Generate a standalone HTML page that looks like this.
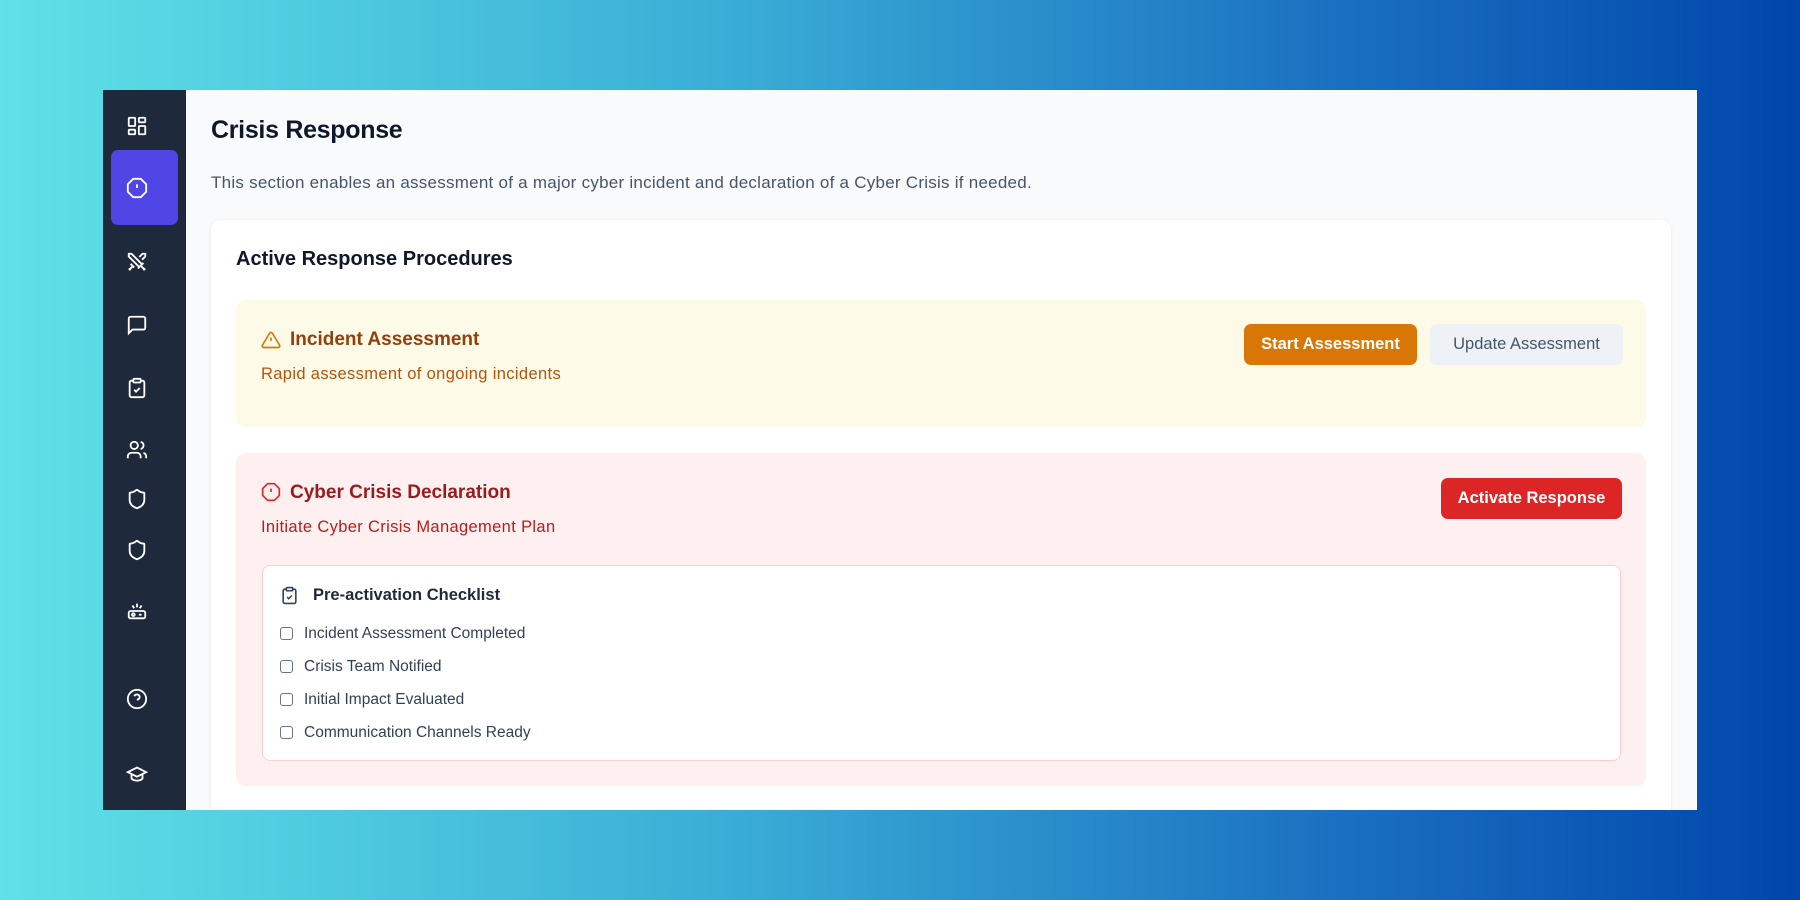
<!DOCTYPE html>
<html><head><style>
*{box-sizing:border-box;margin:0;padding:0}
body{width:1800px;height:900px;overflow:hidden;background:linear-gradient(90deg,#5fe1e6 0%,#3aaed6 40%,#1a6fc0 75%,#0046ab 100%);font-family:"Liberation Sans",sans-serif;position:relative}
.frame{position:absolute;left:103px;top:90px;width:1594px;height:720px;background:#f8fafc;overflow:hidden}
.side{position:absolute;left:0;top:0;width:83px;height:720px;background:#1e293b}
.ic{position:absolute;left:23px;width:22px;height:22px}
.active{position:absolute;left:8px;top:60px;width:67px;height:75px;background:#4f46e5;border-radius:7px}
h1{position:absolute;left:108px;top:26px;font-size:25px;font-weight:700;color:#0f172a;letter-spacing:-0.3px}
.desc{position:absolute;left:108px;top:83px;font-size:17px;letter-spacing:0.25px;color:#475569}
.card{position:absolute;left:108px;top:130px;width:1460px;height:620px;background:#fff;border-radius:10px;box-shadow:0 1px 4px rgba(0,0,0,.08)}
h2{position:absolute;left:25px;top:28px;font-size:20px;font-weight:700;color:#0f172a}
.box{position:absolute;left:25px;width:1410px;border-radius:10px}
.y{top:80px;height:127px;background:#fefae8}
.r{top:233px;height:333px;background:#fef0f0}
.t{position:absolute;left:54px;font-size:19px;font-weight:700}
.s{position:absolute;left:25px;font-size:16.5px;letter-spacing:0.35px}
.btn{position:absolute;height:41px;border-radius:7px;font-size:16.5px;font-weight:700;line-height:41px;text-align:center;color:#fff}
.chk{position:absolute;left:26px;top:112px;width:1359px;height:196px;background:#fff;border:1px solid #fbcfd4;border-radius:8px}
.item{position:absolute;left:41px;font-size:15.5px;color:#334155}
.cb{position:absolute;left:17px;width:13px;height:13px;border:1.5px solid #64748b;border-radius:3px}
</style></head><body>
<div class="frame">
<div class="side">
<svg class="ic" style="top:25px" viewBox="0 0 24 24" fill="none" stroke="#fff" stroke-width="2"><rect x="3" y="3" width="7" height="9" rx="1"/><rect x="14" y="3" width="7" height="5" rx="1"/><rect x="14" y="12" width="7" height="9" rx="1"/><rect x="3" y="16" width="7" height="5" rx="1"/></svg>
<div class="active"></div>
<svg class="ic" style="top:87px" viewBox="0 0 24 24" fill="none" stroke="#fff" stroke-width="2"><path d="M7.9 2h8.2L22 7.9v8.2L16.1 22H7.9L2 16.1V7.9z"/><path d="M12 8v4M12 16h.01"/></svg>
<svg class="ic" style="top:161px" viewBox="0 0 24 24" fill="none" stroke="#fff" stroke-width="2"><path d="M14.5 17.5L3 6V3h3l11.5 11.5M13 19l6-6M16 16l4 4M19 21l2-2M14.5 6.5L18 3h3v3l-3.5 3.5M5 14l4 4M7 17l-3 3M3 19l2 2"/></svg>
<svg class="ic" style="top:224px" viewBox="0 0 24 24" fill="none" stroke="#fff" stroke-width="2"><path d="M21 15a2 2 0 0 1-2 2H7l-4 4V5a2 2 0 0 1 2-2h14a2 2 0 0 1 2 2z"/></svg>
<svg class="ic" style="top:287px" viewBox="0 0 24 24" fill="none" stroke="#fff" stroke-width="2"><rect x="8" y="2" width="8" height="4" rx="1"/><path d="M16 4h2a2 2 0 0 1 2 2v14a2 2 0 0 1-2 2H6a2 2 0 0 1-2-2V6a2 2 0 0 1 2-2h2"/><path d="M9 14l2 2 4-4"/></svg>
<svg class="ic" style="top:349px" viewBox="0 0 24 24" fill="none" stroke="#fff" stroke-width="2"><path d="M16 21v-2a4 4 0 0 0-4-4H6a4 4 0 0 0-4 4v2"/><circle cx="9" cy="7" r="4"/><path d="M22 21v-2a4 4 0 0 0-3-3.9M16 3.1a4 4 0 0 1 0 7.8"/></svg>
<svg class="ic" style="top:398px" viewBox="0 0 24 24" fill="none" stroke="#fff" stroke-width="2"><path d="M20 13c0 5-3.5 7.5-7.7 9a1 1 0 0 1-.7 0C7.5 20.5 4 18 4 13V6a1 1 0 0 1 1-1c2 0 4.5-1.2 6.2-2.7a1.2 1.2 0 0 1 1.5 0C14.5 3.8 17 5 19 5a1 1 0 0 1 1 1z"/></svg>
<svg class="ic" style="top:449px" viewBox="0 0 24 24" fill="none" stroke="#fff" stroke-width="2"><path d="M20 13c0 5-3.5 7.5-7.7 9a1 1 0 0 1-.7 0C7.5 20.5 4 18 4 13V6a1 1 0 0 1 1-1c2 0 4.5-1.2 6.2-2.7a1.2 1.2 0 0 1 1.5 0C14.5 3.8 17 5 19 5a1 1 0 0 1 1 1z"/></svg>
<svg class="ic" style="top:510px" viewBox="0 0 24 24" fill="none" stroke="#fff" stroke-width="2"><rect x="3" y="12" width="18" height="8" rx="2"/><circle cx="8" cy="16" r="1.5"/><path d="M14 16h3M12 4v4M7 6l2 3M17 6l-2 3"/></svg>
<svg class="ic" style="top:598px" viewBox="0 0 24 24" fill="none" stroke="#fff" stroke-width="2"><circle cx="12" cy="12" r="10"/><path d="M9.1 9a3 3 0 0 1 5.8 1c0 2-3 3-3 3M12 17h.01"/></svg>
<svg class="ic" style="top:673px" viewBox="0 0 24 24" fill="none" stroke="#fff" stroke-width="2"><path d="M22 10L12 5 2 10l10 5 10-5zM6 12v5c3 3 9 3 12 0v-5"/></svg>
</div>
<h1>Crisis Response</h1>
<div class="desc">This section enables an assessment of a major cyber incident and declaration of a Cyber Crisis if needed.</div>
<div class="card">
<h2>Active Response Procedures</h2>
<div class="box y">
<svg style="position:absolute;left:25px;top:30px" width="20" height="20" viewBox="0 0 24 24" fill="none" stroke="#d97706" stroke-width="2"><path d="M10.3 3.9L1.8 18a2 2 0 0 0 1.7 3h17a2 2 0 0 0 1.7-3L13.7 3.9a2 2 0 0 0-3.4 0zM12 9v4M12 17h.01"/></svg>
<div class="t" style="top:29px;color:#92400e">Incident Assessment</div>
<div class="s" style="top:65px;color:#b45309">Rapid assessment of ongoing incidents</div>
<div class="btn" style="left:1008px;top:24px;width:173px;background:#d97706">Start Assessment</div>
<div class="btn" style="left:1194px;top:24px;width:193px;background:#eef2f7;color:#475569;font-weight:400">Update Assessment</div>
</div>
<div class="box r">
<svg style="position:absolute;left:25px;top:29px" width="20" height="20" viewBox="0 0 24 24" fill="none" stroke="#dc2626" stroke-width="2"><path d="M7.9 2h8.2L22 7.9v8.2L16.1 22H7.9L2 16.1V7.9z"/><path d="M12 8v4M12 16h.01"/></svg>
<div class="t" style="top:29px;color:#991b1b">Cyber Crisis Declaration</div>
<div class="s" style="top:65px;color:#b91c1c">Initiate Cyber Crisis Management Plan</div>
<div class="btn" style="left:1205px;top:25px;width:181px;background:#dc2626">Activate Response</div>
<div class="chk">
<svg style="position:absolute;left:17px;top:20px" width="19" height="19" viewBox="0 0 24 24" fill="none" stroke="#334155" stroke-width="2"><rect x="8" y="2" width="8" height="4" rx="1"/><path d="M16 4h2a2 2 0 0 1 2 2v14a2 2 0 0 1-2 2H6a2 2 0 0 1-2-2V6a2 2 0 0 1 2-2h2"/><path d="M9 14l2 2 4-4"/></svg>
<div style="position:absolute;left:50px;top:20px;font-size:16.5px;font-weight:700;color:#1e293b">Pre-activation Checklist</div>
<div class="cb" style="top:61px"></div><div class="item" style="top:59px">Incident Assessment Completed</div>
<div class="cb" style="top:94px"></div><div class="item" style="top:92px">Crisis Team Notified</div>
<div class="cb" style="top:127px"></div><div class="item" style="top:125px">Initial Impact Evaluated</div>
<div class="cb" style="top:160px"></div><div class="item" style="top:158px">Communication Channels Ready</div>
</div>
</div>
</div>
</div>
</body></html>
